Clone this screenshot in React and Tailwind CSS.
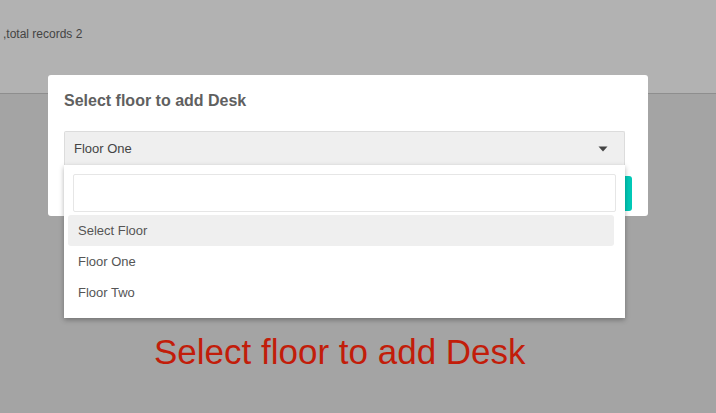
import React from "react";

const OPTIONS = ["Select Floor", "Floor One", "Floor Two"];

function Caret() {
  return (
    <svg width="10" height="6" viewBox="0 0 10 6" className="text-[#444]">
      <path d="M0.5 0.5 L9.5 0.5 L5 5.5 Z" fill="currentColor" />
    </svg>
  );
}

function FloorModal() {
  return (
    <div className="absolute left-[48px] top-[75px] w-[600px] h-[141px] rounded-[3px] bg-white px-4 pt-[16px]">
      <h2 className="text-[16px] font-bold leading-[19px] text-[#606060]">
        Select floor to add Desk
      </h2>

      <div className="relative mt-[21px]">
        {/* select box */}
        <div className="flex h-[34px] w-[561px] items-center justify-between rounded-t-[2px] border border-[#dcdcdc] border-b-0 bg-[#efefef] pl-[9px] pr-[16px]">
          <span className="text-[13px] text-[#444]">Floor One</span>
          <Caret />
        </div>

        {/* footer button, half hidden behind the dropdown */}
        <div className="mt-[11px] flex justify-end">
          <div className="h-[35px] w-[60px] rounded-[3px] bg-[#00c9b7]" />
        </div>

        {/* open dropdown */}
        <div className="absolute left-0 top-[34px] z-10 w-[561px] bg-white pl-[4px] pr-[11px] pt-[9px] pb-[10px] shadow-[0_2px_5px_rgba(0,0,0,0.3)]">
          <div className="ml-[5px] mr-[-2px] h-[38px] rounded-[2px] border border-[#e6e6e6] bg-white" />
          <ul className="mt-[3px] flex flex-col">
            {OPTIONS.map((o, i) => (
              <li
                key={o}
                className={
                  "flex h-[31px] items-center rounded-[3px] px-[10px] text-[13px] text-[#555] " +
                  (i === 0 ? "bg-[#efefef]" : "")
                }
              >
                {o}
              </li>
            ))}
          </ul>
        </div>
      </div>
    </div>
  );
}

export default function App() {
  return (
    <div className="relative h-[413px] w-[716px] overflow-hidden bg-[#a4a4a4] font-['Liberation_Sans',Arial,sans-serif]">
      <div className="h-[94px] border-b border-[#8e8e8e] bg-[#b2b2b2] pl-[3px] pt-[25px]">
        <p className="text-[12px] text-[#444]">,total records 2</p>
      </div>

      <div className="pl-[154px] pt-[238px]">
        <p className="text-[35px] leading-[40px] text-[#c21d0a]">
          Select floor to add Desk
        </p>
      </div>

      <FloorModal />
    </div>
  );
}
